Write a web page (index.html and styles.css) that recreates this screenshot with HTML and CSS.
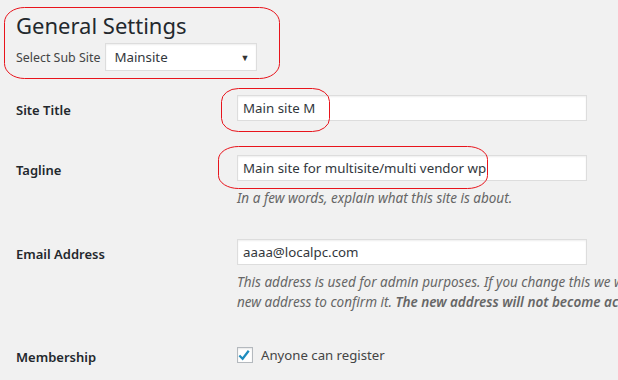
FILE: index.html
```html
<!DOCTYPE html>
<html lang="en">
<head>
    <meta charset="UTF-8">
    <meta name="viewport" content="width=device-width, initial-scale=1.0">
    <title>General Settings</title>
    <link rel="stylesheet" href="styles.css">
</head>
<body>
    <div class="wrap">
        <h1>General Settings</h1>
        <div class="subsite">
            <span class="subsite-label">Select Sub Site</span>
            <div class="select">
                <span>Mainsite</span>
                <span class="select-arrow">&#9660;</span>
            </div>
        </div>

        <div class="form-table">
            <div class="row">
                <div class="th">Site Title</div>
                <div class="td">
                    <input class="regular-text" type="text" value="Main site M">
                </div>
            </div>

            <div class="row">
                <div class="th">Tagline</div>
                <div class="td">
                    <input class="regular-text" type="text" value="Main site for multisite/multi vendor wp">
                    <p class="description">In a few words, explain what this site is about.</p>
                </div>
            </div>

            <div class="row">
                <div class="th">Email Address</div>
                <div class="td">
                    <input class="regular-text" type="text" value="aaaa@localpc.com">
                    <p class="description">This address is used for admin purposes. If you change this we will send you an email at your<br>new address to confirm it. <strong>The new address will not become active until confirmed.</strong></p>
                </div>
            </div>

            <div class="row row-check">
                <div class="th">Membership</div>
                <div class="td">
                    <label class="check-line">
                        <span class="checkbox">
                            <svg width="16" height="16" viewBox="0 0 16 16"><polyline points="2.5,8.5 6,12 12.5,3.5" fill="none" stroke="#1e8cbe" stroke-width="2.4"/></svg>
                        </span>
                        Anyone can register
                    </label>
                </div>
            </div>
        </div>

        <!-- red marks drawn over the screenshot -->
        <svg class="marks" width="618" height="380" viewBox="0 0 618 380">
            <rect x="4.5" y="7.5" width="275" height="71" rx="20" ry="15"/>
            <rect x="221.5" y="88.5" width="108" height="43" rx="17" ry="13"/>
            <rect x="218.5" y="146.5" width="269" height="42" rx="20" ry="13"/>
        </svg>
    </div>
</body>
</html>
```

FILE: styles.css
```css
* {
    margin: 0;
    padding: 0;
    box-sizing: border-box;
}

html, body {
    overflow: hidden;
}

body {
    font-family: "Noto Sans", "Open Sans", sans-serif;
    background: #f1f1f1;
    color: #444;
    font-size: 13px;
    width: 618px;
    height: 380px;
}

.wrap {
    position: relative;
    padding-left: 16px;
    height: 100%;
}

h1 {
    font-size: 22px;
    font-weight: 400;
    line-height: 29px;
    color: #23282d;
    padding-top: 11px;
}

.subsite {
    display: flex;
    align-items: center;
    gap: 5px;
    margin-top: 3px;
}

.subsite-label {
    font-size: 12.4px;
    color: #444;
}

.select {
    display: flex;
    align-items: center;
    justify-content: space-between;
    width: 152px;
    height: 28px;
    padding: 0 7px 0 8px;
    background: #fff;
    border: 1px solid #ddd;
    box-shadow: inset 0 1px 2px rgba(0,0,0,0.07);
    font-size: 13.3px;
    color: #32373c;
}

.select-arrow {
    font-size: 9px;
    color: #333;
}

.form-table {
    margin-top: 7px;
}

.row {
    display: grid;
    grid-template-columns: 221px 1fr;
    padding: 15px 0;
}

.row-check {
    padding-top: 14px;
}

.th {
    padding-top: 7px;
    line-height: 20px;
    font-size: 13px;
    font-weight: 600;
    color: #23282d;
}

.td {
    min-width: 0;
}

.regular-text {
    display: block;
    width: 350px;
    height: 26px;
    margin: 2px 0;
    padding: 0 5px;
    border: 1px solid #ddd;
    box-shadow: inset 0 1px 2px rgba(0,0,0,0.07);
    background: #fff;
    font-family: inherit;
    font-size: 13.3px;
    color: #32373c;
    outline: none;
}

.description {
    margin: 7px 0 -1px;
    font-size: 13.5px;
    line-height: 20px;
    font-style: italic;
    color: #666;
    white-space: nowrap;
}

.description strong {
    font-weight: 600;
}

.check-line {
    display: flex;
    align-items: center;
    gap: 8px;
    height: 26px;
    margin: 2px 0;
    font-size: 13.2px;
    color: #444;
}

.checkbox {
    display: flex;
    width: 16px;
    height: 16px;
    background: #fff;
    border: 1px solid #b4b9be;
    box-shadow: inset 0 1px 2px rgba(0,0,0,0.1);
}

.checkbox svg {
    margin: -1px 0 0 -1px;
}

.marks {
    position: absolute;
    top: 0;
    left: 0;
    pointer-events: none;
}

.marks rect {
    fill: none;
    stroke: #e8141c;
    stroke-width: 1;
}
```
